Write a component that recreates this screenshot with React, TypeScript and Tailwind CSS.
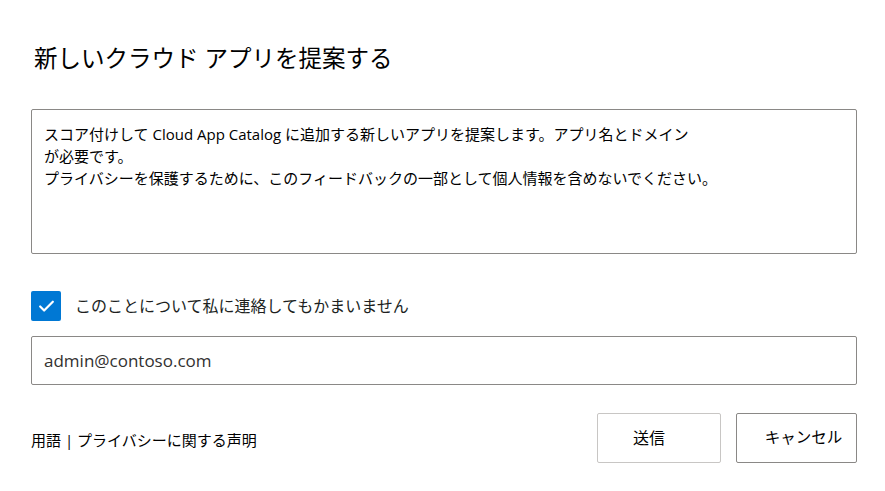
import { Check } from "lucide-react"

const font = "font-['Open_Sans','Noto_Sans_CJK_JP',sans-serif]"

const Checkbox = ({ label }: { label: string }) => (
  <label className="flex items-center gap-[14px]">
    <span className="flex h-[30px] w-[30px] items-center justify-center rounded-[2px] bg-[#0078d4]">
      <Check className="h-[19px] w-[19px] text-white" strokeWidth={2.8} />
    </span>
    <span className="text-[16px] leading-[22px] text-[#201f1e]">{label}</span>
  </label>
)

const App = () => {
  return (
    <div className={`${font} min-h-[491px] w-[885px] bg-white pl-[31px] pr-[28px] text-black`}>
      <h1 className="pl-[3px] pt-[42px] text-[23.5px] font-normal leading-[32px]">
        新しいクラウド アプリを提案する
      </h1>

      <div className="mt-[35px] h-[145px] rounded-[2px] border border-[#8a8886] px-[12px] pt-[13px] text-[15px] leading-[22px] text-black">
        スコア付けして Cloud App Catalog に追加する新しいアプリを提案します。アプリ名とドメイン
        <br />
        が必要です。
        <br />
        プライバシーを保護するために、このフィードバックの一部として個人情報を含めないでください。
      </div>

      <div className="mt-[37px]">
        <Checkbox label="このことについて私に連絡してもかまいません" />
      </div>

      <div className="mt-[15px] flex h-[49px] items-center rounded-[2px] border border-[#8a8886] px-[12px] text-[17px] text-[#323130]">
        admin@contoso.com
      </div>

      <div className="mt-[28px] flex items-center justify-between">
        <div className="pt-[4px] text-[15px] text-black">用語 | プライバシーに関する声明</div>
        <div className="flex gap-[15px]">
          <button className="h-[50px] w-[124px] rounded-[2px] border border-[#c8c6c4] bg-white pr-[20px] text-[16px] text-black">
            送信
          </button>
          <button className="h-[50px] w-[121px] rounded-[2px] border border-[#8a8886] bg-white pl-[14px] text-[15.5px] text-black">
            キャンセル
          </button>
        </div>
      </div>
    </div>
  )
}

export default App
